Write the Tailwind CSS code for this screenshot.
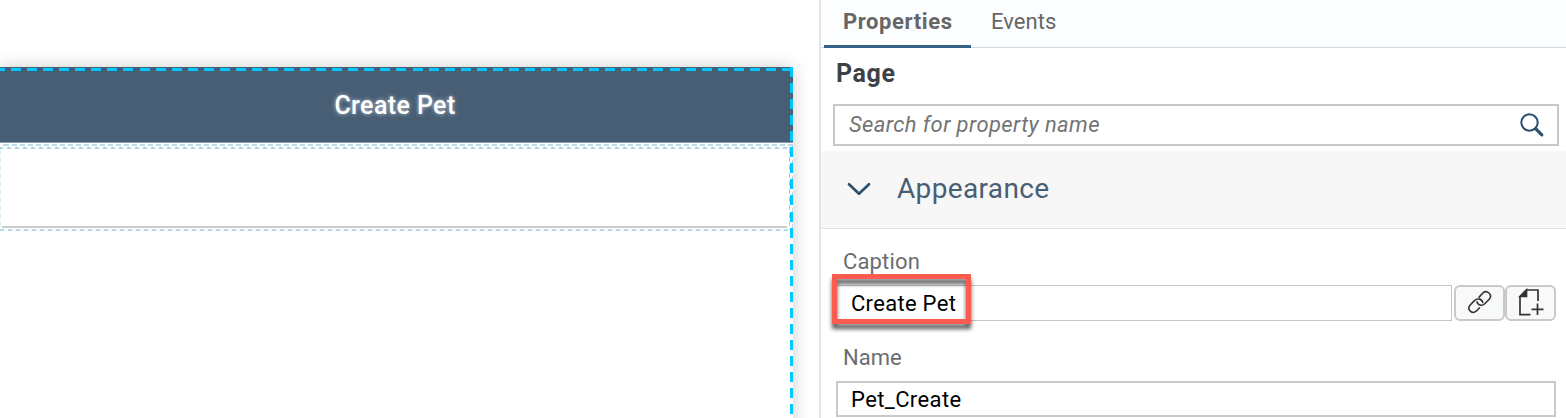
<!DOCTYPE html>
<html lang="en">
<head>
<meta charset="utf-8">
<title>Page Properties</title>
<script src="https://cdn.jsdelivr.net/npm/@tailwindcss/browser@4"></script>
</head>
<body class="w-[1566px] h-[418px] overflow-hidden bg-white font-['Roboto',sans-serif]">
<div class="flex h-full w-full">
  <!-- Design canvas -->
  <main class="w-[819px] shrink-0 overflow-hidden pt-[67px]">
    <section class="relative w-[793px] h-[380px] bg-white shadow-[0_0_16px_rgba(0,0,0,0.2)]">
      <header class="flex h-[76px] items-center justify-center bg-[#475e75] border-b border-[#8b9cb3] pt-[2px] pr-[3px]">
        <h1 class="text-[25px] leading-[30px] font-medium tracking-[0.4px] text-white whitespace-nowrap [text-shadow:0_0_4px_rgba(255,255,255,0.65)]">Create Pet</h1>
      </header>
      <div class="mt-px h-[2px] bg-[repeating-linear-gradient(90deg,#b9dcea_0_5px,#fff_5px_8px)] bg-[position:4px_0]"></div>
      <div class="relative mt-px h-[84px] w-[790px]">
        <div class="h-[2px] bg-[repeating-linear-gradient(90deg,#b0d8e6_0_4px,#f2fafc_4px_8px)] [background-position:-1px_0]"></div>
        <div class="flex h-[80px] justify-between">
          <div class="w-px bg-[repeating-linear-gradient(180deg,#d9eff6_0_5px,#fff_5px_8px)]"></div>
          <div class="ml-px h-[79px] flex-1 border-b-2 border-[#cbcbcb]"></div>
          <div class="ml-[2px] w-px bg-[repeating-linear-gradient(180deg,#a9d5e6_0_5px,#fff_5px_8px)]"></div>
        </div>
        <div class="h-[2px] bg-[repeating-linear-gradient(90deg,#b9dcea_0_4px,#f2fafc_4px_8px)]"></div>
      </div>
      <!-- Selection outline -->
      <div class="absolute left-[-5px] right-0 top-px h-[3px] bg-[repeating-linear-gradient(90deg,#00c8ff_0_10px,transparent_10px_16.06px)]"></div>
      <div class="absolute right-0 top-[77px] h-[88px] w-px bg-[repeating-linear-gradient(180deg,#b9dcea_0_5px,#fff_5px_8px)]"></div>
      <div class="absolute right-0 top-0 bottom-0 w-[3px] bg-[repeating-linear-gradient(180deg,#00c8ff_0_10px,transparent_10px_16.06px)]"></div>
    </section>
  </main>

  <!-- Property panel -->
  <aside class="flex flex-1 flex-col border-l-2 border-[#e3e4e8]">
    <nav class="flex h-[48px] border-b border-[#d5d8db] bg-[#fcfdff] pl-[3px] text-[22px] leading-[26px] text-[#666]">
      <div class="h-[48px] w-[147px] border-b-[3px] border-[#346187] pl-[19px] pt-[9px] font-bold tracking-[0.6px]">Properties</div>
      <div class="pl-[20px] pt-[9px] tracking-[0.05px]">Events</div>
    </nav>
    <h2 class="h-[56px] pl-[15px] pt-[11px] text-[25px] leading-[30px] font-bold tracking-[0.6px] text-[#3b4347]">Page</h2>
    <div class="ml-[12px] mr-[7px] flex h-[42px] items-center justify-between border-2 border-[#c8c8c8] bg-white pl-[14px] pr-[12px]">
      <span class="pb-px text-[22px] leading-[26px] italic tracking-[0.4px] text-[#747474]">Search for property name</span>
      <svg class="size-[26px]" viewBox="0 0 26 26" fill="none" stroke="#2b506f"><circle cx="10.5" cy="10.5" r="8.2" stroke-width="2"/><path d="M16.8 16.8 22.8 22.8" stroke-width="3.2" stroke-linecap="round"/></svg>
    </div>
    <div class="mt-[5px] flex h-[78px] items-center border-b border-[#e3e3e3] bg-[#f7f7f7] pl-[26px]">
      <svg class="h-[16px] w-[24px]" viewBox="0 0 24 16" fill="none" stroke="#2d506f" stroke-width="2.7" stroke-linecap="round" stroke-linejoin="round"><path d="M2 2.2 12 11.8 22 2.2"/></svg>
      <h3 class="ml-[26px] pb-px text-[28px] leading-[34px] tracking-[0.35px] text-[#475e75]">Appearance</h3>
    </div>
    <div class="pl-[22px] pt-[20px] text-[22px] leading-[26px] tracking-[0.15px] text-[#6a6d70]">Caption</div>
    <div class="mt-[10px] flex h-[36px] pl-[15px]">
      <div class="relative flex w-[616px] items-center border border-[#c4c4c4] pl-[14px] pt-px text-[22px] leading-[26px] tracking-[0.3px] text-black">
        <span>Create Pet</span>
        <div class="absolute left-[-5px] top-[-12px] h-[50px] w-[139px] border-[5px] border-[#fc5c50] [filter:drop-shadow(0_5px_2px_rgba(0,0,0,0.65))]"></div>
      </div>
      <div class="ml-[2px] flex w-[51px] items-center justify-center rounded-[6px] border-2 border-[#c9c9c9] bg-[#f8faf9] pb-[3px]">
        <svg class="size-[26px]" viewBox="0 0 26 26" fill="none" stroke="#333" stroke-width="1.6" stroke-linecap="round"><path d="M12.1 8.1 16.1 3.8C19.7.5 26 5.6 22.4 10L18 14.5C14.8 17.7 10.5 16.1 10 12.7"/><path d="M12.5 18.8 9.2 22.2C5.2 25.6-.5 20.5 3 16.2L7.4 11.6C10.5 8.7 15.2 10 15.7 13.5"/></svg>
      </div>
      <div class="flex w-[51px] items-center justify-center rounded-[6px] border-2 border-[#c9c9c9] bg-[#f8faf9] pb-[3px]">
        <svg class="size-[28px]" viewBox="0 0 28 28" fill="none" stroke="#333" stroke-width="1.7"><path d="M13.5 26.6H3V8.5L9.5 2H21V13"/><path d="M3 8.5 9.5 2V8.5Z" fill="#333"/><path d="M20.5 15.5V27M14.5 21.3H26.5"/></svg>
      </div>
    </div>
    <div class="pl-[22px] pt-[24px] text-[22px] leading-[26px] text-[#6a6d70]">Name</div>
    <div class="ml-[15px] mt-[10px] flex h-[36px] w-[720px] shrink-0 items-center border-2 border-[#c9c9c9] pl-[13px] pt-px text-[22px] leading-[26px] tracking-[0.4px] text-black">Pet_Create</div>
  </aside>
</div>
</body>
</html>
